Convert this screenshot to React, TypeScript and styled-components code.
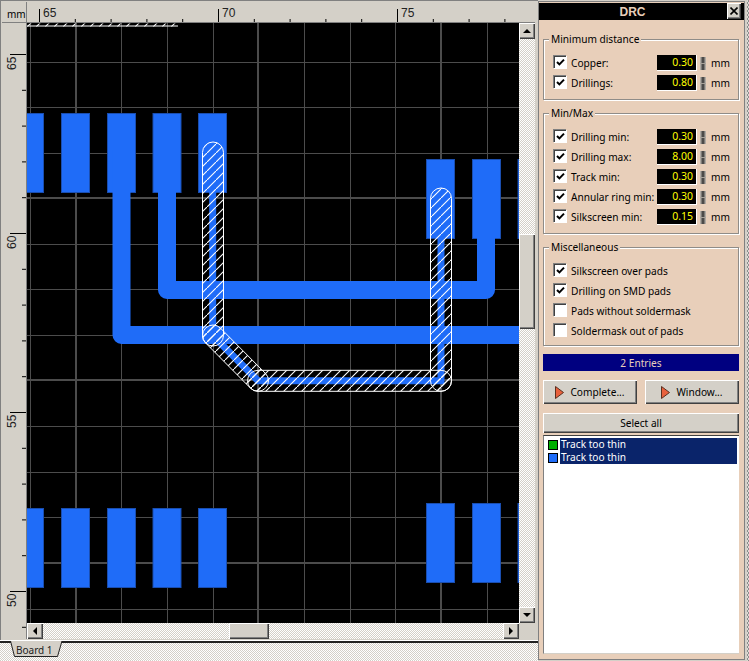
import styled, { createGlobalStyle } from "styled-components";

const GlobalStyle = createGlobalStyle`
  html, body {
    margin: 0;
    padding: 0;
    width: 749px;
    height: 661px;
    overflow: hidden;
    background: #d4d0c8;
    font-family: "Noto Sans", "Liberation Sans", Arial, sans-serif;
    font-size: 10.15px;
    color: #000;
  }
  * {
    box-sizing: border-box;
  }
`;

const PEACH = "#e8cfba";
const GREY = "#d4d0c8";
const BLUE = "#1f6cf8";
const dither = `repeating-conic-gradient(${GREY} 0 25%, #fff 0 50%) 0 0 / 2px 2px`;
const raised = `inset 1px 1px 0 #fff, inset -1px -1px 0 #404040, inset -2px -2px 0 #808080`;

const Screen = styled.div`
  display: flex;
  width: 749px;
  height: 661px;
`;

const Editor = styled.div`
  display: flex;
  flex-direction: column;
  width: 538px;
  flex: none;
`;

const Workspace = styled.div`
  display: grid;
  grid-template-columns: 25px 492px 16px 3px;
  grid-template-rows: 21px 600px 16px;
  height: 640px;
  border-top: 1px solid #808080;
  border-left: 1px solid #808080;
  padding: 1px 0 0 1px;
`;

const Corner = styled.div`
  padding: 5px 0 0 5px;
  font-size: 10px;
  line-height: 14px;
  border-bottom: 1px solid #808080;
  border-right: 1px solid #808080;
`;

const TopRuler = styled.svg`
  display: block;
  grid-column: 2 / 4;
  border-bottom: 1px solid #808080;
`;

const LeftRuler = styled.svg`
  display: block;
  grid-row: 2 / 4;
  grid-column: 1;
  border-right: 1px solid #808080;
`;

const Canvas = styled.svg`
  display: block;
  background: #000;
  grid-column: 2;
  grid-row: 2;
`;

const VScroll = styled.div`
  grid-column: 3;
  grid-row: 2;
  display: flex;
  flex-direction: column;
  background: ${dither};
`;

const HScroll = styled.div`
  grid-column: 2;
  grid-row: 3;
  display: flex;
  background: ${dither};
`;

const ScrollSpacer = styled.div`
  flex: 1;
`;

const ScrollButton = styled.div`
  width: 16px;
  height: 16px;
  flex: none;
  display: flex;
  align-items: center;
  justify-content: center;
  background: ${GREY};
  box-shadow: ${raised};
`;

const Arrow = styled.div<{ $dir: "up" | "down" | "left" | "right" }>`
  width: 0;
  height: 0;
  border-style: solid;
  border-color: transparent;
  ${(p) =>
    p.$dir === "up"
      ? "border-width: 0 4px 4px; border-bottom-color: #000;"
      : p.$dir === "down"
      ? "border-width: 4px 4px 0; border-top-color: #000;"
      : p.$dir === "left"
      ? "border-width: 4px 4px 4px 0; border-right-color: #000;"
      : "border-width: 4px 0 4px 4px; border-left-color: #000;"}
`;

const VThumb = styled.div`
  width: 16px;
  height: 95px;
  margin-top: 195px;
  background: ${GREY};
  box-shadow: ${raised};
`;

const HThumb = styled.div`
  width: 40px;
  height: 16px;
  margin-left: 186px;
  background: ${GREY};
  box-shadow: ${raised};
`;

const TabBar = styled.div`
  height: 21px;
  padding-left: 10px;
  border-top: 1px solid #fff;
  background: ${dither};
  position: relative;

  &::before {
    content: "";
    position: absolute;
    inset: 0 0 auto 0;
    height: 2px;
    background: #222;
  }
`;

const Tab = styled.div`
  position: relative;
  width: 53px;
  height: 16px;
  padding: 2px 0 0 6px;
  line-height: 14px;
  font-size: 10px;
  color: #222;

  svg {
    position: absolute;
    inset: 0;
    z-index: 0;
  }
  span {
    position: relative;
  }
`;

const Panel = styled.div`
  width: 207px;
  height: 659px;
  margin-top: 1px;
  flex: none;
  display: flex;
  flex-direction: column;
  border: 1px solid #808080;
  padding: 1px 5px 5px 4px;
  background: ${PEACH};
`;

const SideStrip = styled.div`
  flex: 1;
  background: repeating-conic-gradient(#8c8c8c 0 25%, #e0dcd6 0 50%) 0 0 / 2px 4px;
  border-left: 2px solid ${GREY};
`;

const TitleBar = styled.div`
  display: flex;
  align-items: center;
  justify-content: center;
  position: relative;
  height: 17px;
  margin: 0 -5px 0 -4px;
  padding-right: 18px;
  background: #000;
  color: ${PEACH};
  font-family: "Liberation Sans", Arial, sans-serif;
  font-weight: bold;
  font-size: 12px;
`;

const CloseButton = styled.div`
  position: absolute;
  right: 3px;
  top: 0;
  width: 14px;
  height: 16px;
  display: flex;
  align-items: center;
  justify-content: center;
  background: ${GREY};
  box-shadow: ${raised};
`;

const Group = styled.div<{ $first?: boolean; $tight?: boolean }>`
  position: relative;
  margin-top: ${(p) => (p.$first ? 19 : 13)}px;
  border: 1px solid #8f8c88;
  box-shadow: inset 1px 1px 0 #fff, 1px 1px 0 #fff;
  padding: 13px 0 ${(p) => (p.$tight ? 4 : 6)}px 9px;
`;

const Legend = styled.div`
  position: absolute;
  top: -7px;
  left: 5px;
  padding: 0 2px 0 2px;
  line-height: 13px;
  background: ${PEACH};
`;

const Row = styled.div`
  display: flex;
  align-items: center;
  height: 20px;
`;

const CheckBox = styled.div`
  width: 13px;
  height: 13px;
  flex: none;
  margin: -3px 5px 0 0;
  background: #fff;
  border-top: 1px solid #808080;
  border-left: 1px solid #808080;
  box-shadow: inset 1px 1px 0 #404040, 1px 1px 0 #fff;
  display: flex;
  align-items: center;
  justify-content: center;
`;

const Label = styled.div`
  flex: 1;
  white-space: nowrap;
`;

const ValueBox = styled.div`
  width: 40px;
  height: 16px;
  line-height: 15px;
  text-align: right;
  padding-right: 3px;
  background: #000;
  color: #ffff00;
  font-size: 10.5px;
  border-right: 1px solid #fff;
  border-bottom: 1px solid #fff;
`;

const Spin = styled.div`
  width: 6px;
  height: 14px;
  margin: 0 5px 0 3px;
  background: linear-gradient(90deg, #c8c2ba, #333 50%, #c8c2ba);
  border-top: 1px solid ${PEACH};
  position: relative;

  &::after {
    content: "";
    position: absolute;
    left: 0;
    right: 0;
    top: 6px;
    height: 1px;
    background: #a8a29a;
  }
`;

const Unit = styled.div`
  width: 27px;
  flex: none;
`;

const EntriesBar = styled.div`
  margin-top: 8px;
  height: 17px;
  line-height: 18px;
  text-align: center;
  background: #000080;
  color: ${PEACH};
`;

const ButtonRow = styled.div`
  display: flex;
  justify-content: space-between;
  margin-top: 9px;
`;

const ActionButton = styled.div`
  width: 94px;
  height: 24px;
  display: flex;
  align-items: center;
  justify-content: center;
  gap: 6px;
  background: ${GREY};
  box-shadow: ${raised};
`;

const WideButton = styled.div`
  margin-top: 9px;
  height: 20px;
  line-height: 21px;
  text-align: center;
  background: ${GREY};
  box-shadow: ${raised};
`;

const ResultList = styled.div`
  flex: 1;
  margin-top: 2px;
  padding: 2px 2px 0 4px;
  background: #fff;
  border-top: 1px solid #404040;
  border-left: 1px solid #808080;
  border-bottom: 1px solid ${GREY};
`;

const ResultItem = styled.div`
  display: flex;
  align-items: center;
  height: 13px;
`;

const Swatch = styled.div<{ $color: string }>`
  width: 8px;
  height: 8px;
  flex: none;
  margin: 0 3px 0 1px;
  background: ${(p) => p.$color};
  outline: 1px solid #000;
`;

const ResultText = styled.div`
  flex: 1;
  height: 13px;
  line-height: 13px;
  padding-left: 1px;
  background: #0a246a;
  color: #fff;
`;

const PAD_TOP = [15.5, 61.5, 107.5, 153, 198.5];
const PAD_RIGHT = [426.5, 472.5, 518];
const GRID_X = [30.5, 76, 121.5, 167.5, 213.5, 258, 304.5, 350.5, 395.5, 441, 487.5];
const GRID_Y = [62.5, 107.5, 153.5, 198, 244.5, 289.5, 335.5, 380, 426.5, 472.5, 517.5, 563, 609.5];
const THICK_X = [76, 258, 441];
const THICK_Y = [198, 380, 563];

function capsule(x1: number, y1: number, x2: number, y2: number, r: number) {
  const len = Math.hypot(x2 - x1, y2 - y1);
  const nx = ((y2 - y1) / len) * r;
  const ny = (-(x2 - x1) / len) * r;
  return `M${x1 + nx} ${y1 + ny} L${x2 + nx} ${y2 + ny} A${r} ${r} 0 0 1 ${x2 - nx} ${y2 - ny} L${x1 - nx} ${y1 - ny} A${r} ${r} 0 0 1 ${x1 + nx} ${y1 + ny} Z`;
}

const HATCH_SEGMENTS = [
  capsule(213, 152.5, 213, 335.5, 10.5),
  capsule(213, 335.5, 258, 380.8, 10.5),
  capsule(258, 380.8, 441, 380.8, 10.5),
  capsule(441, 380.8, 441, 198.5, 10.5),
];

function Pad({ x, y }: { x: number; y: number }) {
  return <rect x={x} y={y} width={28} height={79} fill={BLUE} stroke="#1a4eb0" strokeWidth={1} />;
}

function PcbCanvas() {
  return (
    <Canvas width={492} height={600} viewBox="27 23 492 600">
      <defs>
        <pattern id="hatch" width={9} height={9} patternUnits="userSpaceOnUse">
          <path d="M0 9 L9 0" stroke="#fff" strokeWidth={1.1} fill="none" />
        </pattern>
      </defs>
      {GRID_X.map((x) => (
        <line key={x} x1={x} x2={x} y1={23} y2={623} stroke="#4c4c4c" strokeWidth={THICK_X.includes(x) ? 2 : 1} />
      ))}
      {GRID_Y.map((y) => (
        <line key={y} x1={27} x2={519} y1={y} y2={y} stroke="#4c4c4c" strokeWidth={THICK_Y.includes(y) ? 2 : 1} />
      ))}
      {PAD_TOP.map((x) => (
        <Pad key={x} x={x} y={113.5} />
      ))}
      {PAD_TOP.map((x) => (
        <Pad key={x} x={x} y={508.5} />
      ))}
      {PAD_RIGHT.map((x) => (
        <Pad key={x} x={x} y={159.5} />
      ))}
      {PAD_RIGHT.map((x) => (
        <Pad key={x} x={x} y={503.5} />
      ))}
      <path d="M121.5 150 V335 H530" fill="none" stroke={BLUE} strokeWidth={18} strokeLinejoin="round" />
      <path d="M167 150 V290 H486 V200" fill="none" stroke={BLUE} strokeWidth={18} strokeLinejoin="round" />
      <path d="M212.7 152 V335.5 L258 380.8 H441 V198" fill="none" stroke={BLUE} strokeWidth={7} />
      {HATCH_SEGMENTS.map((d) => (
        <path key={d} d={d} fill="url(#hatch)" stroke="#fff" strokeWidth={1} />
      ))}
      <rect x={27} y={23.5} width={151} height={3} fill="url(#hatch)" />
      <rect x={27} y={25.5} width={151} height={1} fill="#fff" />
    </Canvas>
  );
}

const TOP_LABELS = [
  { x: 39, text: "65" },
  { x: 218, text: "70" },
  { x: 397, text: "75" },
];

function HorizontalRuler() {
  const ticks = Array.from({ length: 14 }, (_, i) => i).filter((i) => i % 5 !== 0);
  return (
    <TopRuler width={508} height={21}>
      {ticks.map((i) => (
        <line key={i} x1={12.5 + i * 35.8} x2={12.5 + i * 35.8} y1={17} y2={20} stroke="#000" />
      ))}
      {TOP_LABELS.map((l) => (
        <g key={l.x}>
          <line x1={l.x - 27 + 0.5} x2={l.x - 27 + 0.5} y1={7} y2={20} stroke="#000" />
          <text x={l.x - 27 + 4} y={15} fontSize={12} fontFamily="Liberation Sans" fill="#222">
            {l.text}
          </text>
        </g>
      ))}
    </TopRuler>
  );
}

const LEFT_LABELS = [
  { y: 31, text: "65" },
  { y: 210, text: "60" },
  { y: 389, text: "55" },
  { y: 568, text: "50" },
];

function VerticalRuler() {
  const ticks = Array.from({ length: 17 }, (_, i) => i).filter((i) => i % 5 !== 0);
  return (
    <LeftRuler width={25} height={616}>
      {ticks.map((i) => (
        <line key={i} x1={20} x2={24} y1={31.5 + i * 35.8} y2={31.5 + i * 35.8} stroke="#000" />
      ))}
      {LEFT_LABELS.map((l) => (
        <g key={l.y}>
          <line x1={8} x2={24} y1={l.y + 0.5} y2={l.y + 0.5} stroke="#000" />
          <text
            transform={`translate(14 ${l.y + 16}) rotate(-90)`}
            fontSize={12}
            fontFamily="Liberation Sans"
            fill="#222"
          >
            {l.text}
          </text>
        </g>
      ))}
    </LeftRuler>
  );
}

function Checkmark() {
  return (
    <svg width={9} height={9} viewBox="0 0 9 9">
      <path d="M1 4 L3.4 6.4 L8 1.6" fill="none" stroke="#000" strokeWidth={2} />
    </svg>
  );
}

function CheckRow({ label, value, checked = true }: { label: string; value?: string; checked?: boolean }) {
  return (
    <Row>
      <CheckBox>{checked && <Checkmark />}</CheckBox>
      <Label>{label}</Label>
      {value && (
        <>
          <ValueBox>{value}</ValueBox>
          <Spin />
          <Unit>mm</Unit>
        </>
      )}
    </Row>
  );
}

function PlayIcon() {
  return (
    <svg width={9} height={13} viewBox="0 0 9 13">
      <path d="M0.5 0.5 L8.5 6.5 L0.5 12.5 Z" fill="#e8603c" stroke="#5a3020" strokeWidth={1} />
    </svg>
  );
}

export default function App() {
  return (
    <Screen>
      <GlobalStyle />
      <Editor>
        <Workspace>
          <Corner>mm</Corner>
          <HorizontalRuler />
          <VerticalRuler />
          <PcbCanvas />
          <VScroll>
            <ScrollButton>
              <Arrow $dir="up" />
            </ScrollButton>
            <VThumb />
            <ScrollSpacer />
            <ScrollButton>
              <Arrow $dir="down" />
            </ScrollButton>
          </VScroll>
          <HScroll>
            <ScrollButton>
              <Arrow $dir="left" />
            </ScrollButton>
            <HThumb />
            <ScrollSpacer />
            <ScrollButton>
              <Arrow $dir="right" />
            </ScrollButton>
          </HScroll>
        </Workspace>
        <TabBar>
          <Tab>
            <svg width={53} height={16}>
              <path d="M0.5 0 L4.5 15.5 L47.5 15.5 L52 0" fill={GREY} stroke="#222" strokeWidth={1} />
            </svg>
            <span>Board 1</span>
          </Tab>
        </TabBar>
      </Editor>
      <Panel>
        <TitleBar>
          DRC
          <CloseButton>
            <svg width={8} height={8} viewBox="0 0 8 8">
              <path d="M0.5 0.5 L7.5 7.5 M7.5 0.5 L0.5 7.5" stroke="#000" strokeWidth={1.6} />
            </svg>
          </CloseButton>
        </TitleBar>
        <Group $first>
          <Legend>Minimum distance</Legend>
          <CheckRow label="Copper:" value="0.30" />
          <CheckRow label="Drillings:" value="0.80" />
        </Group>
        <Group>
          <Legend>Min/Max</Legend>
          <CheckRow label="Drilling min:" value="0.30" />
          <CheckRow label="Drilling max:" value="8.00" />
          <CheckRow label="Track min:" value="0.30" />
          <CheckRow label="Annular ring min:" value="0.30" />
          <CheckRow label="Silkscreen min:" value="0.15" />
        </Group>
        <Group $tight>
          <Legend>Miscellaneous</Legend>
          <CheckRow label="Silkscreen over pads" />
          <CheckRow label="Drilling on SMD pads" />
          <CheckRow label="Pads without soldermask" checked={false} />
          <CheckRow label="Soldermask out of pads" checked={false} />
        </Group>
        <EntriesBar>2 Entries</EntriesBar>
        <ButtonRow>
          <ActionButton>
            <PlayIcon />
            Complete...
          </ActionButton>
          <ActionButton>
            <PlayIcon />
            Window...
          </ActionButton>
        </ButtonRow>
        <WideButton>Select all</WideButton>
        <ResultList>
          <ResultItem>
            <Swatch $color="#00b000" />
            <ResultText>Track too thin</ResultText>
          </ResultItem>
          <ResultItem>
            <Swatch $color={BLUE} />
            <ResultText>Track too thin</ResultText>
          </ResultItem>
        </ResultList>
      </Panel>
      <SideStrip />
    </Screen>
  );
}
